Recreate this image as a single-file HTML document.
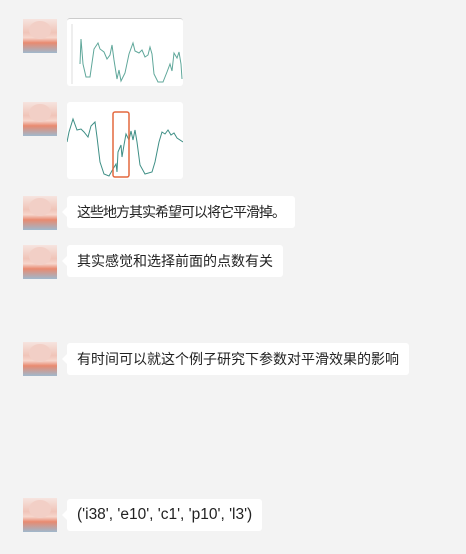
<!DOCTYPE html><html><head><meta charset="utf-8"><style>
body{margin:0;width:466px;height:554px;background:#f3f3f3;position:relative;overflow:hidden;font-family:"Liberation Sans","Noto Sans CJK SC",sans-serif}
.av{position:absolute;left:23px;width:34px;height:34px;background:linear-gradient(180deg,#f6e4df 0%,#f0c4b8 40%,#f6d6cc 55%,#e88a70 70%,#9fb8cc 100%);overflow:hidden}
.av:after{content:"";position:absolute;left:6px;top:2px;width:22px;height:18px;border-radius:50%;background:#f2cfc6}
.b{position:absolute;left:67px;background:#fff;border-radius:3px;font-size:14px;color:#222;line-height:32px;padding:0 10px;height:32px;white-space:nowrap}
.b:before{content:"";position:absolute;left:-5px;top:11px;border:5px solid transparent;border-right-color:#fff;border-left:0}
.img{position:absolute;left:67px;width:116px;background:#fff;border-radius:3px}
</style></head><body>
<div class="av" style="top:19px"></div>
<div class="img" style="top:18px;height:67px;border-top:1px solid #ccc">
<svg width="116" height="67"><polyline fill="none" stroke="#5fa79a" stroke-width="1" points="13,45 14,20 16,45 19,58 23,58 27,30 31,24 33,30 37,33 40,40 43,36 45,26 47,41 50,60 52,51 54,62 58,54 62,35 66,24 68,32 72,34 75,31 78,38 81,36 83,28 85,35 87,55 91,63 96,63 100,53 103,45 105,52 107,34 110,39 112,33 114,45 115,60"/><line x1="5" y1="5" x2="5" y2="65" stroke="#ddd"/></svg></div>
<div class="av" style="top:102px"></div>
<div class="img" style="top:102px;height:77px">
<svg width="116" height="77"><polyline fill="none" stroke="#3f8f86" stroke-width="1" points="0,40 2,30 6,17 10,28 14,27 17,30 21,35 24,24 28,20 30,35 33,60 37,72 42,74 46,67 49,62 50,70 51,50 54,43 55,55 57,43 59,32 62,38 64,29 66,38 68,28 70,40 73,63 78,72 85,70 88,60 92,40 95,30 98,32 101,28 104,33 107,31 110,36 116,40"/><rect x="46" y="10" width="16" height="65" rx="2" fill="none" stroke="#e4683f" stroke-width="1.5"/></svg></div>
<div class="av" style="top:196px"></div><div class="b" style="top:196px;letter-spacing:-1px">这些地方其实希望可以将它平滑掉。</div>
<div class="av" style="top:245px"></div><div class="b" style="top:245px">其实感觉和选择前面的点数有关</div>
<div class="av" style="top:342px"></div><div class="b" style="top:343px">有时间可以就这个例子研究下参数对平滑效果的影响</div>
<div class="av" style="top:498px"></div><div class="b" style="top:499px;font-size:15.5px">('i38', 'e10', 'c1', 'p10', 'l3')</div>
</body></html>
